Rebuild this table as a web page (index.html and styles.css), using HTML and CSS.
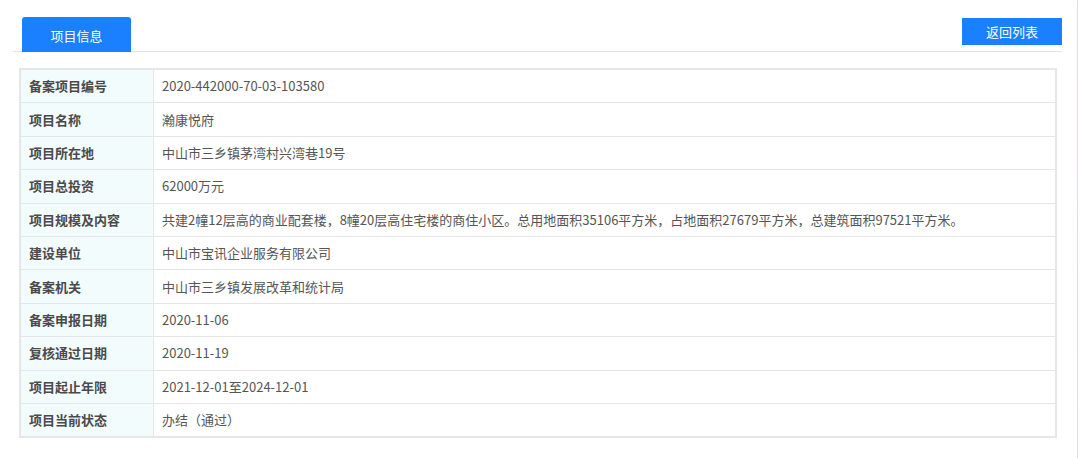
FILE: index.html
```html
<!DOCTYPE html>
<html lang="zh-CN">
<head>
<meta charset="utf-8">
<link rel="stylesheet" href="styles.css">
</head>
<body>
<div class="page">
  <div class="topbar">
    <div class="tab">项目信息</div>
    <button class="back">返回列表</button>
  </div>
  <table class="info">
    <tr><th>备案项目编号</th><td>2020-442000-70-03-103580</td></tr>
    <tr><th>项目名称</th><td>瀚康悦府</td></tr>
    <tr><th>项目所在地</th><td>中山市三乡镇茅湾村兴湾巷19号</td></tr>
    <tr><th>项目总投资</th><td>62000万元</td></tr>
    <tr><th>项目规模及内容</th><td>共建2幢12层高的商业配套楼，8幢20层高住宅楼的商住小区。总用地面积35106平方米，占地面积27679平方米，总建筑面积97521平方米。</td></tr>
    <tr><th>建设单位</th><td>中山市宝讯企业服务有限公司</td></tr>
    <tr><th>备案机关</th><td>中山市三乡镇发展改革和统计局</td></tr>
    <tr><th>备案申报日期</th><td>2020-11-06</td></tr>
    <tr><th>复核通过日期</th><td>2020-11-19</td></tr>
    <tr><th>项目起止年限</th><td>2021-12-01至2024-12-01</td></tr>
    <tr><th>项目当前状态</th><td>办结（通过）</td></tr>
  </table>
</div>
<div class="edge"></div>
</body>
</html>
```
FILE: styles.css
```css
html, body {
  margin: 0;
  padding: 0;
  background: #fff;
}
body {
  font-family: "Noto Sans CJK SC", "Microsoft YaHei", sans-serif;
  font-size: 13px;
  color: #555;
  width: 1080px;
  height: 458px;
  overflow: hidden;
  position: relative;
}
.page {
  padding: 17px 18px 0 13px;
}
.topbar {
  display: flex;
  justify-content: space-between;
  align-items: flex-start;
  border-bottom: 1px solid #e3e3e3;
  height: 34px;
}
.tab {
  margin-left: 9px;
  width: 109px;
  height: 35px;
  background: #1a80ff;
  color: #fff;
  border-radius: 3px 3px 0 0;
  display: flex;
  align-items: center;
  justify-content: center;
  font-size: 13px;
  box-sizing: border-box;
  padding-top: 1px;
}
.back {
  margin-top: 1px;
  width: 100px;
  height: 27px;
  background: #1a80ff;
  color: #fff;
  border: 0;
  border-radius: 0;
  font-family: inherit;
  font-size: 13px;
  padding: 0;
}
.info {
  margin: 16px 0 0 6px;
  width: 1038px;
  border-collapse: collapse;
  border: 2px solid #e6e6e6;
}
.info th, .info td {
  border: 1px solid #e6e6e6;
  height: 32.4px;
  padding: 0 0 0 8px;
  text-align: left;
  vertical-align: middle;
  line-height: 16px;
}
.info th {
  width: 124px;
  background: #f3fcfd;
  font-weight: bold;
  color: #4a4a4a;
}
.info td {
  color: #555;
}
.edge {
  position: absolute;
  right: 2px;
  top: 0;
  width: 1px;
  height: 458px;
  background: linear-gradient(#f4d6e4, #e0dde6);
}
```
